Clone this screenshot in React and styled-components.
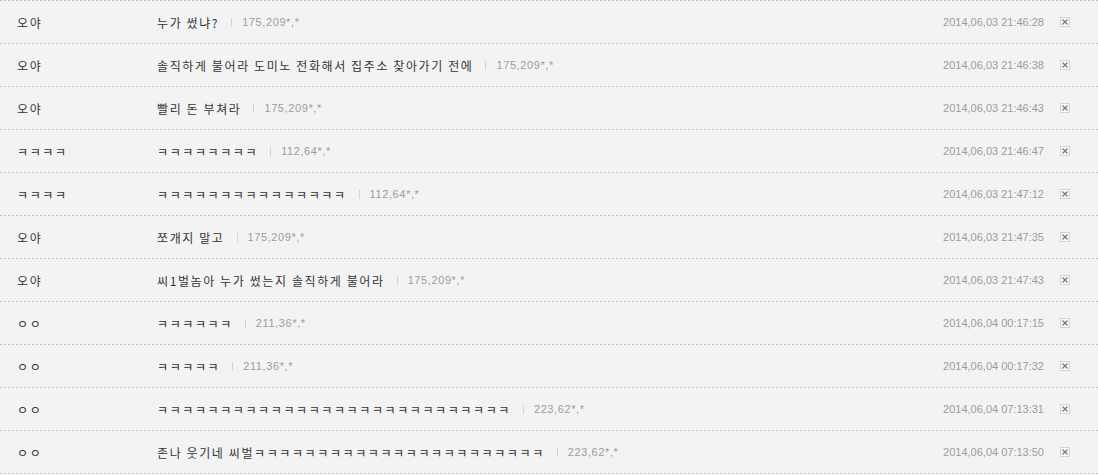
import React from 'react';
import styled, { createGlobalStyle } from 'styled-components';

const GlobalStyle = createGlobalStyle`
  html, body {
    margin: 0;
    padding: 0;
    background: #f3f3f3;
  }
  body {
    font-family: "Noto Sans CJK KR", "Noto Sans", "Liberation Sans", sans-serif;
  }
`;

const kk = n => 'ㅋ'.repeat(n);

const comments = [
  { name: '오야', text: '누가 썼냐?', ip: '175,209*,*', date: '2014,06,03 21:46:28' },
  { name: '오야', text: '솔직하게 불어라 도미노 전화해서 집주소 찾아가기 전에', ip: '175,209*,*', date: '2014,06,03 21:46:38' },
  { name: '오야', text: '빨리 돈 부쳐라', ip: '175,209*,*', date: '2014,06,03 21:46:43' },
  { name: kk(4), text: kk(8), ip: '112,64*,*', date: '2014,06,03 21:46:47' },
  { name: kk(4), text: kk(15), ip: '112,64*,*', date: '2014,06,03 21:47:12' },
  { name: '오야', text: '쪼개지 말고', ip: '175,209*,*', date: '2014,06,03 21:47:35' },
  { name: '오야', text: '씨1벌놈아 누가 썼는지 솔직하게 불어라', ip: '175,209*,*', date: '2014,06,03 21:47:43' },
  { name: 'ㅇㅇ', text: kk(6), ip: '211,36*,*', date: '2014,06,04 00:17:15' },
  { name: 'ㅇㅇ', text: kk(5), ip: '211,36*,*', date: '2014,06,04 00:17:32' },
  { name: 'ㅇㅇ', text: kk(28), ip: '223,62*,*', date: '2014,06,04 07:13:31' },
  { name: 'ㅇㅇ', text: '존나 웃기네 씨벌' + kk(23), ip: '223,62*,*', date: '2014,06,04 07:13:50' },
];

// dotted separator line, drawn as a repeating 2px-on / 2px-off gradient
const dashes = `linear-gradient(to right, #c4c4c4 2px, transparent 2px)`;

const CommentList = styled.ul`
  list-style: none;
  margin: 0;
  padding: 0 0 1px;
  width: 1098px;
  background-image: ${dashes};
  background-size: 4px 1px;
  background-repeat: repeat-x;
  background-position: 0 bottom;
`;

const CommentRow = styled.li`
  display: flex;
  align-items: center;
  height: 42px;
  padding: 1px 28px 0 17px;
  background-image: ${dashes};
  background-size: 4px 1px;
  background-repeat: repeat-x;
  background-position: 0 0;
  font-size: 12px;
  color: #333;
`;

const Nick = styled.span`
  width: 140px;
  flex: none;
  white-space: nowrap;
  letter-spacing: 1.6px;
`;

const Body = styled.div`
  flex: 1;
  display: flex;
  align-items: center;
  white-space: nowrap;
`;

const Memo = styled.span`
  color: #333;
  letter-spacing: 1.6px;
`;

const Divider = styled.span`
  display: inline-block;
  width: 1px;
  height: 9px;
  background: #d4d4d4;
  margin: 1px 10px 0 12px;
`;

const Meta = styled.span`
  font-size: 11px;
  letter-spacing: ${props => props.$spacing || '0'};
  color: #9c9c9c;
  font-family: "Liberation Sans", sans-serif;
  white-space: nowrap;
`;

const DeleteButton = styled.button`
  margin-left: 16px;
  width: 10px;
  height: 10px;
  padding: 0;
  border: 1px solid #d4d4d4;
  background: #fafafa;
  display: flex;
  align-items: center;
  justify-content: center;
  cursor: pointer;
`;

const DelIcon = () => (
  <svg width="6" height="6" viewBox="0 0 6 6">
    <path d="M0.5 0.5 L5.5 5.5 M5.5 0.5 L0.5 5.5" stroke="#777" strokeWidth="1.2" />
  </svg>
);

const App = () => (
  <>
    <GlobalStyle />
    <CommentList>
      {comments.map((c, i) => (
        <CommentRow key={i}>
          <Nick>{c.name}</Nick>
          <Body>
            <Memo>{c.text}</Memo>
            <Divider />
            <Meta $spacing="0.6px">{c.ip}</Meta>
          </Body>
          <Meta>{c.date}</Meta>
          <DeleteButton aria-label="삭제"><DelIcon /></DeleteButton>
        </CommentRow>
      ))}
    </CommentList>
  </>
);

export default App;
